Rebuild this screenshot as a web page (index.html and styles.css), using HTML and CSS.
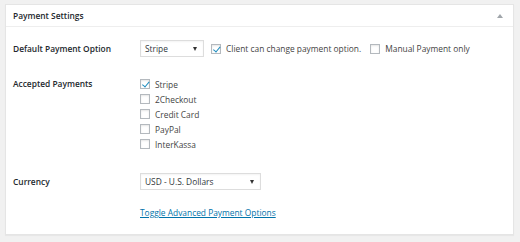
FILE: index.html
```html
<!DOCTYPE html>
<html>
<head>
<meta charset="utf-8">
<link rel="stylesheet" href="styles.css">
</head>
<body>
<div class="panel">
  <div class="panel-head">
    <span class="title">Payment Settings</span>
    <span class="toggle"></span>
  </div>
  <div class="panel-body">
    <div class="row row-default">
      <div class="label">Default Payment Option</div>
      <div class="field inline">
        <div class="select sel-small"><span>Stripe</span><i class="arrow"></i></div>
        <label class="check"><span class="box checked"></span>Client can change payment option.</label>
        <label class="check"><span class="box"></span>Manual Payment only</label>
      </div>
    </div>
    <div class="row row-accepted">
      <div class="label">Accepted Payments</div>
      <div class="field list">
        <label class="check"><span class="box checked"></span>Stripe</label>
        <label class="check"><span class="box"></span>2Checkout</label>
        <label class="check"><span class="box"></span>Credit Card</label>
        <label class="check"><span class="box"></span>PayPal</label>
        <label class="check"><span class="box"></span>InterKassa</label>
      </div>
    </div>
    <div class="row row-currency">
      <div class="label">Currency</div>
      <div class="field">
        <div class="select sel-wide"><span>USD - U.S. Dollars</span><i class="arrow"></i></div>
      </div>
    </div>
    <div class="row row-link">
      <div class="label"></div>
      <div class="field"><a class="link" href="#">Toggle Advanced Payment Options</a></div>
    </div>
  </div>
</div>
</body>
</html>
```
FILE: styles.css
```css
html, body {
  margin: 0;
  padding: 0;
  background: #f1f1f1;
  font-family: "Open Sans", "Liberation Sans", sans-serif;
  font-size: 8.4px;
  line-height: 11px;
  color: #444;
}
body {
  padding: 4px 6px 6px 5px;
}
.panel {
  background: #fff;
  border: 1px solid #e5e5e5;
  box-shadow: 0 1px 1px rgba(0,0,0,0.04);
  height: 231px;
  box-sizing: border-box;
}
.panel-head {
  height: 21px;
  border-bottom: 1px solid #eee;
  display: flex;
  align-items: center;
  justify-content: space-between;
  padding: 0 8px 0 7px;
}
.title {
  font-weight: 600;
  font-size: 8.4px;
  color: #23282d;
}
.toggle {
  width: 0;
  height: 0;
  border-left: 3px solid transparent;
  border-right: 3px solid transparent;
  border-bottom: 4px solid #a0a5aa;
  margin-right: 2px;
}
.panel-body {
  padding: 0 7px;
}
.row {
  display: flex;
  white-space: nowrap;
}
.label {
  width: 127px;
  flex: none;
  font-weight: 600;
  color: #23282d;
}
.field {
  flex: 1;
}
.row-default {
  margin-top: 13px;
  height: 17px;
  align-items: center;
}
.inline {
  display: flex;
  align-items: center;
}
.select {
  height: 17px;
  box-sizing: border-box;
  border: 1px solid #ddd;
  box-shadow: inset 0 1px 2px rgba(0,0,0,0.05);
  display: flex;
  align-items: center;
  justify-content: space-between;
  padding: 0 6px 0 4px;
  color: #32373c;
}
.sel-small { width: 64px; }
.sel-wide { width: 121px; }
.arrow {
  width: 0;
  height: 0;
  border-left: 2px solid transparent;
  border-right: 2px solid transparent;
  border-top: 4px solid #333;
}
.check {
  display: flex;
  align-items: center;
  gap: 5px;
  color: #444;
  height: 10px;
}
.inline .check:nth-of-type(1) { margin-left: 7px; }
.inline .check:nth-of-type(2) { margin-left: 9px; }
.box {
  width: 10px;
  height: 10px;
  box-sizing: border-box;
  border: 1px solid #b4b9be;
  background: #fff;
  box-shadow: inset 0 1px 2px rgba(0,0,0,0.1);
  position: relative;
  flex: none;
}
.box.checked::after {
  content: "";
  position: absolute;
  left: 2.5px;
  top: 0px;
  width: 2.5px;
  height: 5.5px;
  border-right: 1.5px solid #1e8cbe;
  border-bottom: 1.5px solid #1e8cbe;
  transform: rotate(40deg);
}
.row-accepted {
  margin-top: 22px;
}
.row-accepted .label { line-height: 10px; }
.list {
  display: flex;
  flex-direction: column;
  gap: 5px;
}
.row-currency {
  margin-top: 24px;
  height: 17px;
  align-items: center;
}
.row-link {
  margin-top: 17px;
}
.link {
  color: #0073aa;
  text-decoration: underline;
}
```
